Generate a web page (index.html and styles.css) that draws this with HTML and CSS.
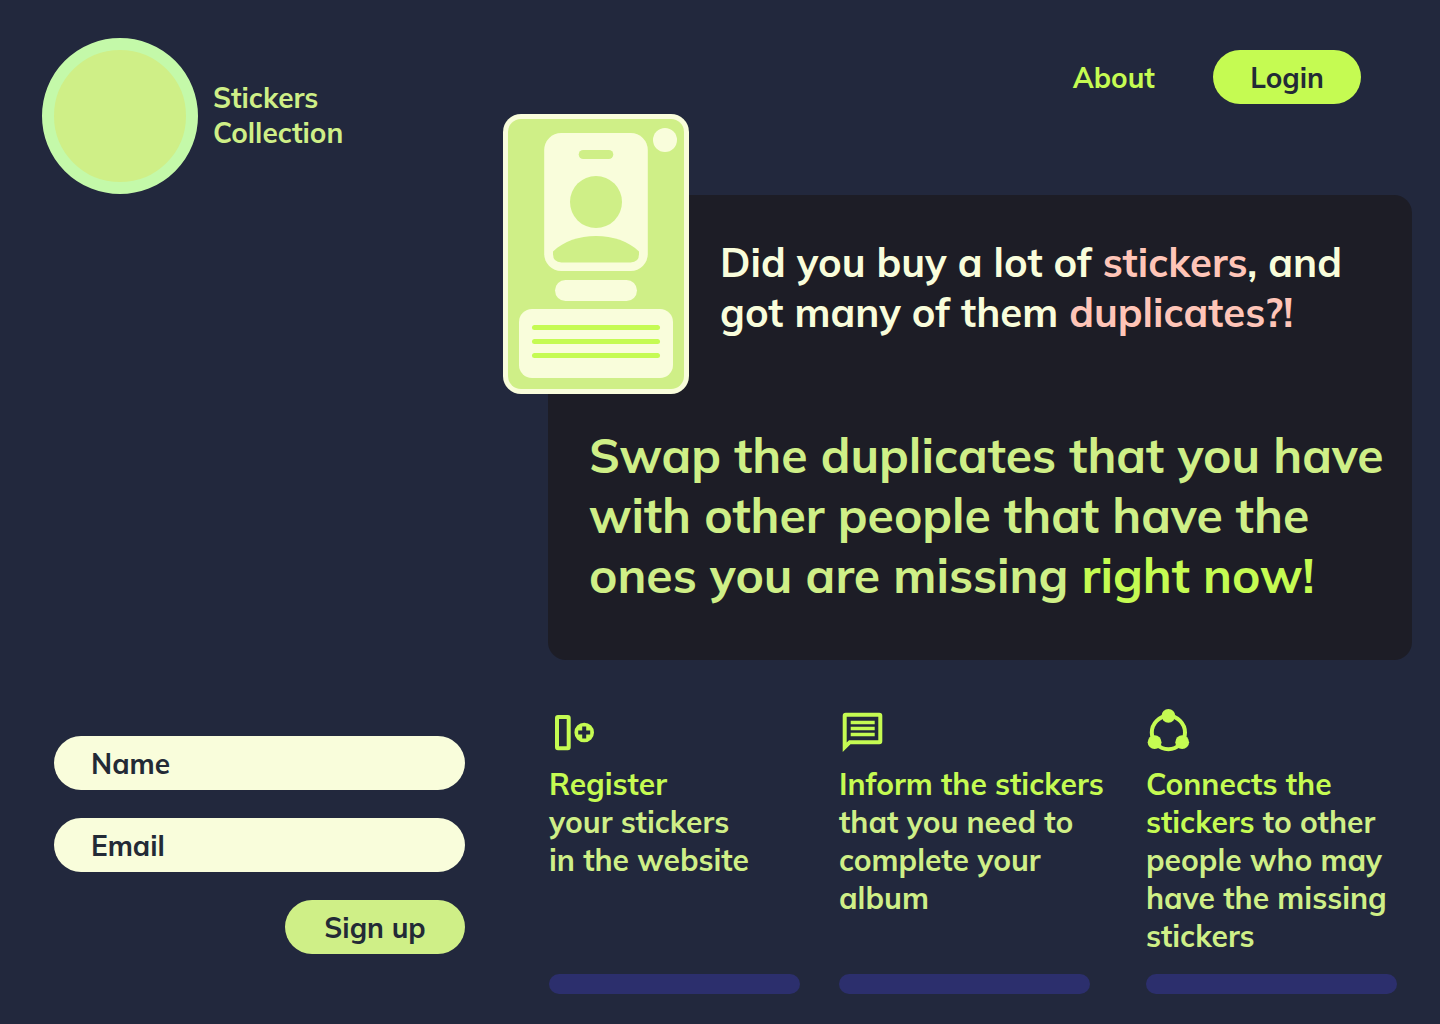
FILE: index.html
```html
<!DOCTYPE html>
<html lang="en">
<head>
  <meta charset="utf-8">
  <meta name="viewport" content="width=device-width, initial-scale=1">
  <title>Stickers Collection</title>
  <link rel="stylesheet" href="styles.css">
</head>
<body>
  <header class="header">
    <a class="brand" href="#">
      <span class="brand-logo"></span>
      <span class="brand-name">Stickers<br>Collection</span>
    </a>
    <nav class="nav">
      <a class="nav-link" href="#about">About</a>
      <button class="button button-login" type="button">Login</button>
    </nav>
  </header>

  <main class="main">
    <section class="hero">
      <svg class="sticker" viewBox="0 0 186 280" aria-hidden="true">
        <rect class="cream" width="186" height="280" rx="18"/>
        <rect class="green" x="5" y="5" width="176" height="270" rx="13"/>
        <circle class="cream" cx="162" cy="26" r="12"/>
        <rect class="cream" x="41.2" y="19" width="103.6" height="138" rx="17"/>
        <rect class="green" x="75.7" y="36" width="34.6" height="9" rx="4.5"/>
        <circle class="green" cx="93" cy="88" r="26"/>
        <path class="green" d="M50 137.500C61 127 76 122 93 122s32 5 43 15.500V140q0 8.400-8.500 8.400h-69Q50 148.400 50 140Z"/>
        <rect class="cream" x="52" y="166" width="82" height="21" rx="10.5"/>
        <rect class="cream" x="16" y="195" width="154" height="69" rx="13"/>
        <rect class="lime" x="29" y="211" width="128" height="5" rx="2.5"/>
        <rect class="lime" x="29" y="225" width="128" height="5" rx="2.5"/>
        <rect class="lime" x="29" y="239" width="128" height="5" rx="2.5"/>
      </svg>
      <h2 class="hero-question">Did you buy a lot of <em class="pink-text">stickers</em>, and<br>got many of them <em class="pink-text">duplicates?!</em></h2>
      <h1 class="hero-title">Swap the duplicates that you have<br>with other people that have the<br>ones you are missing <em class="lime-text">right now!</em></h1>
    </section>

    <form class="signup">
      <input class="field" type="text" name="name" placeholder="Name" aria-label="Name">
      <input class="field" type="email" name="email" placeholder="Email" aria-label="Email">
      <button class="button button-signup" type="submit">Sign up</button>
    </form>

    <section class="features">
      <article class="feature">
        <svg class="icon" viewBox="0 0 48 48" aria-hidden="true">
          <rect x="8" y="9" width="11.700" height="31.300" rx="1" fill="none" stroke="currentColor" stroke-width="4"/>
          <path fill="currentColor" fill-rule="evenodd" d="M35.200 14.700a9.800 9.800 0 1 1 0 19.600a9.800 9.800 0 1 1 0-19.600ZM33.200 18.500v4h-4v4h4v4h4v-4h4v-4h-4v-4Z"/>
        </svg>
        <p class="feature-text"><span class="lime-text">Register</span><br>your stickers<br>in the website</p>
        <span class="feature-bar"></span>
      </article>
      <article class="feature">
        <svg class="icon" viewBox="0 0 48 48" aria-hidden="true">
          <path fill="currentColor" fill-rule="evenodd" d="M3.700 44V7.700q0-3 3-3h33.600q3 0 3 3V33.200q0 3-3 3H11.500ZM7.700 34.600L10 32.200H39.300V8.700H7.700Z"/>
          <path fill="currentColor" d="M11.700 12.700h24v3.500h-24zM11.700 18.800h24v3.500h-24zM11.700 24.800h24v3.500h-24z"/>
        </svg>
        <p class="feature-text"><span class="lime-text">Inform the stickers</span><br>that you need to<br>complete your<br>album</p>
        <span class="feature-bar"></span>
      </article>
      <article class="feature">
        <svg class="icon" viewBox="0 0 48 48" aria-hidden="true">
          <circle cx="22.400" cy="24.600" r="16.600" fill="none" stroke="currentColor" stroke-width="4"/>
          <g fill="currentColor">
            <circle cx="22.400" cy="7.800" r="6.900"/>
            <circle cx="8.600" cy="34.200" r="6.900"/>
            <circle cx="36.200" cy="34.200" r="6.900"/>
          </g>
        </svg>
        <p class="feature-text"><span class="lime-text">Connects the<br>stickers</span> to other<br>people who may<br>have the missing<br>stickers</p>
        <span class="feature-bar"></span>
      </article>
    </section>
  </main>
</body>
</html>
```

FILE: styles.css
```css
:root {
  --night: #22283d;
  --ink: #232a36;
  --panel: #1d1d26;
  --cream: #f9fddb;
  --green: #cfef87;
  --lime: #c5fb52;
  --mint: #c4f9a9;
  --pink: #ffc5b8;
  --indigo: #2c2f6d;
}

* {
  box-sizing: border-box;
}

body {
  margin: 0;
  background: var(--night);
  color: var(--green);
  font-family: Mulish, "Open Sans", sans-serif;
  font-size: 28px;
  font-weight: 700;
}

h1, h2, p {
  margin: 0;
  font-weight: 700;
}

em {
  font-style: normal;
}

.cream { fill: var(--cream); }
.green { fill: var(--green); }
.lime { fill: var(--lime); }
.lime-text { color: var(--lime); }
.pink-text { color: var(--pink); }

.header {
  display: flex;
  justify-content: space-between;
  align-items: flex-start;
  padding: 38px 79px 0 42px;
}

.brand {
  display: flex;
  align-items: center;
  gap: 15px;
  color: var(--green);
  line-height: 35px;
  text-decoration: none;
}

.brand-name {
  padding-bottom: 2px;
}

.brand-logo {
  width: 156px;
  height: 156px;
  border: 12px solid var(--mint);
  border-radius: 50%;
  background: var(--green);
}

.nav {
  display: flex;
  align-items: center;
  gap: 58px;
  padding-top: 12px;
}

.nav-link {
  color: var(--lime);
  text-decoration: none;
}

.button {
  height: 54px;
  padding: 0;
  border: 0;
  border-radius: 27px;
  color: var(--ink);
  font: inherit;
  cursor: pointer;
}

.button-login {
  width: 148px;
  background: var(--lime);
}

.button-signup {
  width: 180px;
  background: var(--green);
}

.main {
  display: grid;
  grid-template-columns: 411fr 864fr;
  column-gap: 83px;
  padding: 1px 28px 30px 54px;
}

.hero {
  position: relative;
  grid-column: 2;
  padding: 42px 0 55px 41px;
  border-radius: 18px;
  background: var(--panel);
}

.sticker {
  position: absolute;
  top: -81px;
  left: -45px;
  width: 186px;
  height: 280px;
}

.hero-question {
  padding-left: 131px;
  color: var(--cream);
  font-size: 40px;
  line-height: 50px;
}

.hero-title {
  margin-top: 88px;
  font-size: 48px;
  line-height: 60px;
}

.signup {
  display: flex;
  flex-direction: column;
  align-items: flex-end;
  gap: 28px;
  padding-top: 76px;
}

.field {
  width: 100%;
  height: 54px;
  padding: 0 37px;
  border: 0;
  border-radius: 27px;
  background: var(--cream);
  color: var(--ink);
  font: inherit;
}

.field::placeholder {
  color: var(--ink);
  opacity: 1;
}

.features {
  display: grid;
  grid-template-columns: 290fr 307fr 266fr;
  padding: 48px 0 0 1px;
}

.feature {
  display: flex;
  flex-direction: column;
}

.icon {
  width: 48px;
  height: 48px;
  color: var(--lime);
}

.feature-text {
  margin: 9px 0 19px;
  font-size: 30px;
  line-height: 38px;
  white-space: nowrap;
}

.feature-bar {
  width: 251px;
  height: 20px;
  margin-top: auto;
  border-radius: 10px;
  background: var(--indigo);
}
```
